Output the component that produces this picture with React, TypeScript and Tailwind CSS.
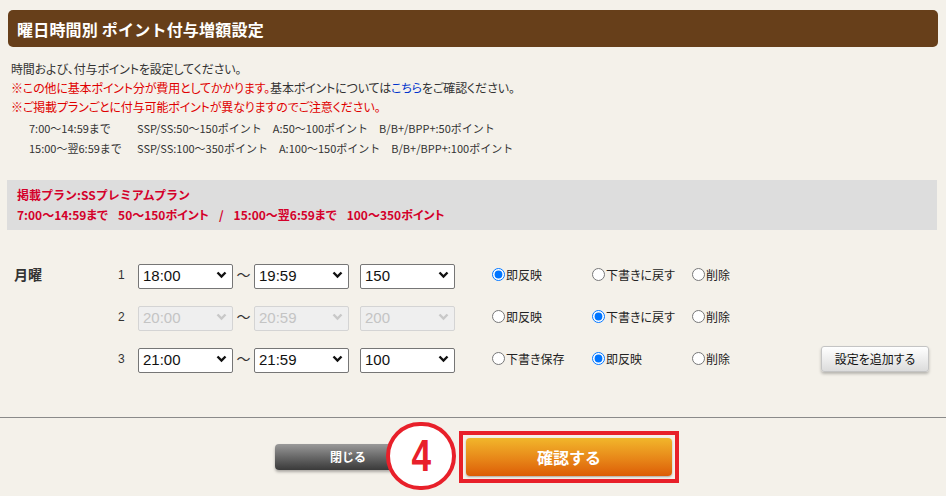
import React from "react";

const jp = "font-['Noto_Sans_CJK_JP','Noto_Sans',sans-serif]";
const palt = "[font-feature-settings:'palt']";

type Opt = { label: string; checked?: boolean };

type Row = {
  no: number;
  from: string;
  to: string;
  pt: string;
  disabled?: boolean;
  opts: Opt[];
  add?: boolean;
};

const rows: Row[] = [
  { no: 1, from: "18:00", to: "19:59", pt: "150", opts: [{ label: "即反映", checked: true }, { label: "下書きに戻す" }, { label: "削除" }] },
  { no: 2, from: "20:00", to: "20:59", pt: "200", disabled: true, opts: [{ label: "即反映" }, { label: "下書きに戻す", checked: true }, { label: "削除" }] },
  { no: 3, from: "21:00", to: "21:59", pt: "100", opts: [{ label: "下書き保存" }, { label: "即反映", checked: true }, { label: "削除" }], add: true },
];

function Select({ value, disabled }: { value: string; disabled?: boolean }) {
  return (
    <div className="relative w-[95px] h-[25px]">
      <select
        disabled={disabled}
        defaultValue={value}
        className={`appearance-none w-full h-full rounded-[2px] border pl-[4px] text-[15px] font-['Liberation_Sans',sans-serif] outline-none ${
          disabled ? "border-[#d4d4d4] bg-[#efefef] text-[#c4c4c4]" : "border-[#767676] bg-white text-[#111]"
        }`}
      >
        <option value={value}>{value}</option>
      </select>
      <svg
        className="absolute right-[6px] top-[9px] pointer-events-none"
        width="11"
        height="8"
        viewBox="0 0 11 8"
      >
        <path d="M1.5 1.5 L5.5 5.5 L9.5 1.5" fill="none" stroke={disabled ? "#c8c8c8" : "#111"} strokeWidth="2.4" />
      </svg>
    </div>
  );
}

export default function App() {
  return (
    <div className={`w-[946px] h-[496px] overflow-hidden bg-[#f4f1ea] text-[#333] ${jp}`}>
      {/* Title bar */}
      <div className="pt-[10px] px-[8px]">
        <div className="h-[37px] rounded-[5px] bg-[#673f1a] flex items-center pl-[9px] text-white font-bold text-[16px] tracking-[0.2px]">
          曜日時間別 ポイント付与増額設定
        </div>
      </div>

      {/* Notes */}
      <div className={`pl-[11px] pt-[12px] text-[12px] leading-[19px] tracking-[-0.15px] ${palt}`}>
        <p>時間および、付与ポイントを設定してください。</p>
        <p>
          <span className="text-[#e00000]">※この他に基本ポイント分が費用としてかかります。</span>
          基本ポイントについては<span className="text-[#0033cc]">こちら</span>をご確認ください。
        </p>
        <p className="text-[#e00000]">※ご掲載プランごとに付与可能ポイントが異なりますのでご注意ください。</p>
      </div>
      <div className="pl-[29px] pt-[2px] text-[11px] leading-[20px] text-[#333]">
        <div className="flex gap-[11px]">
          <span className="w-[97px]">7:00〜14:59まで</span>
          <span>SSP/SS:50〜150ポイント</span>
          <span>A:50〜100ポイント</span>
          <span>B/B+/BPP+:50ポイント</span>
        </div>
        <div className="flex gap-[11px]">
          <span className="w-[97px]">15:00〜翌6:59まで</span>
          <span>SSP/SS:100〜350ポイント</span>
          <span>A:100〜150ポイント</span>
          <span>B/B+/BPP+:100ポイント</span>
        </div>
      </div>

      {/* Plan box */}
      <div className="mt-[22px] ml-[7px] mr-[9px] h-[50px] bg-[#dddddd] pl-[10px] pt-[5px] text-[12px] leading-[20px] font-bold text-[#d4002a]">
        <p>掲載プラン:SSプレミアムプラン</p>
        <p className={`flex gap-[10px] ${palt}`}>
          <span>7:00〜14:59まで</span>
          <span>50〜150ポイント</span>
          <span>/</span>
          <span>15:00〜翌6:59まで</span>
          <span>100〜350ポイント</span>
        </p>
      </div>

      {/* Rows */}
      <div className={`mt-[32px] flex flex-col gap-[17px] ${palt}`}>
        {rows.map((r) => (
          <div key={r.no} className="flex items-center h-[25px]">
            <div className="w-[118px] pl-[14px] text-[14px] font-bold text-[#333]">{r.no === 1 ? "月曜" : ""}</div>
            <div className="w-[20px] text-[12px] text-[#333] font-['Liberation_Sans',sans-serif]">{r.no}</div>
            <Select value={r.from} disabled={r.disabled} />
            <div className="w-[21px] text-center text-[14px] text-[#333]">〜</div>
            <Select value={r.to} disabled={r.disabled} />
            <div className="w-[11px]" />
            <Select value={r.pt} disabled={r.disabled} />
            <div className="w-[37px]" />
            {r.opts.map((o) => (
              <label key={o.label} className="w-[100px] flex items-center text-[12px] text-[#222]">
                <input
                  type="radio"
                  name={`row${r.no}`}
                  defaultChecked={o.checked}
                  className="m-0 w-[13px] h-[13px] accent-[#0075ff]"
                />
                <span className="ml-[1px]">{o.label}</span>
              </label>
            ))}
            {r.add && (
              <button className="ml-[29px] w-[108px] h-[26px] rounded-[3px] border border-[#c4c4c4] bg-gradient-to-b from-white to-[#dcdcdc] shadow-[0_2px_3px_rgba(0,0,0,0.25)] text-[12px] text-[#111]">
                設定を追加する
              </button>
            )}
          </div>
        ))}
      </div>

      {/* Divider */}
      <div className="mt-[46px] border-t border-[#8a8a8a]" />

      {/* Footer buttons */}
      <div className="mt-[13px] pl-[275px] flex items-center">
        <div className="relative flex items-center">
          <button className="w-[146px] h-[26px] rounded-[4px] bg-gradient-to-b from-[#9a9a9a] to-[#3a3a3a] shadow-[0_2px_3px_rgba(0,0,0,0.3)] text-white font-bold text-[12px]">
            閉じる
          </button>
          <div className="absolute left-[111px] top-[-22px] w-[70px] h-[68px] rounded-full border-[4px] border-[#e8202a] bg-white flex items-center justify-center">
            <span className="text-[#e8202a] font-bold text-[44px] leading-none scale-x-[0.8] font-['Liberation_Sans',sans-serif]">4</span>
          </div>
        </div>
        <div className="ml-[38px] border-[4px] border-[#e8202a] p-[3px]">
          <button className="w-[206px] h-[38px] rounded-[4px] bg-gradient-to-b from-[#f1b62b] to-[#dc5c05] shadow-[0_1px_2px_rgba(0,0,0,0.3)] text-white font-bold text-[16px]">
            確認する
          </button>
        </div>
      </div>
    </div>
  );
}
